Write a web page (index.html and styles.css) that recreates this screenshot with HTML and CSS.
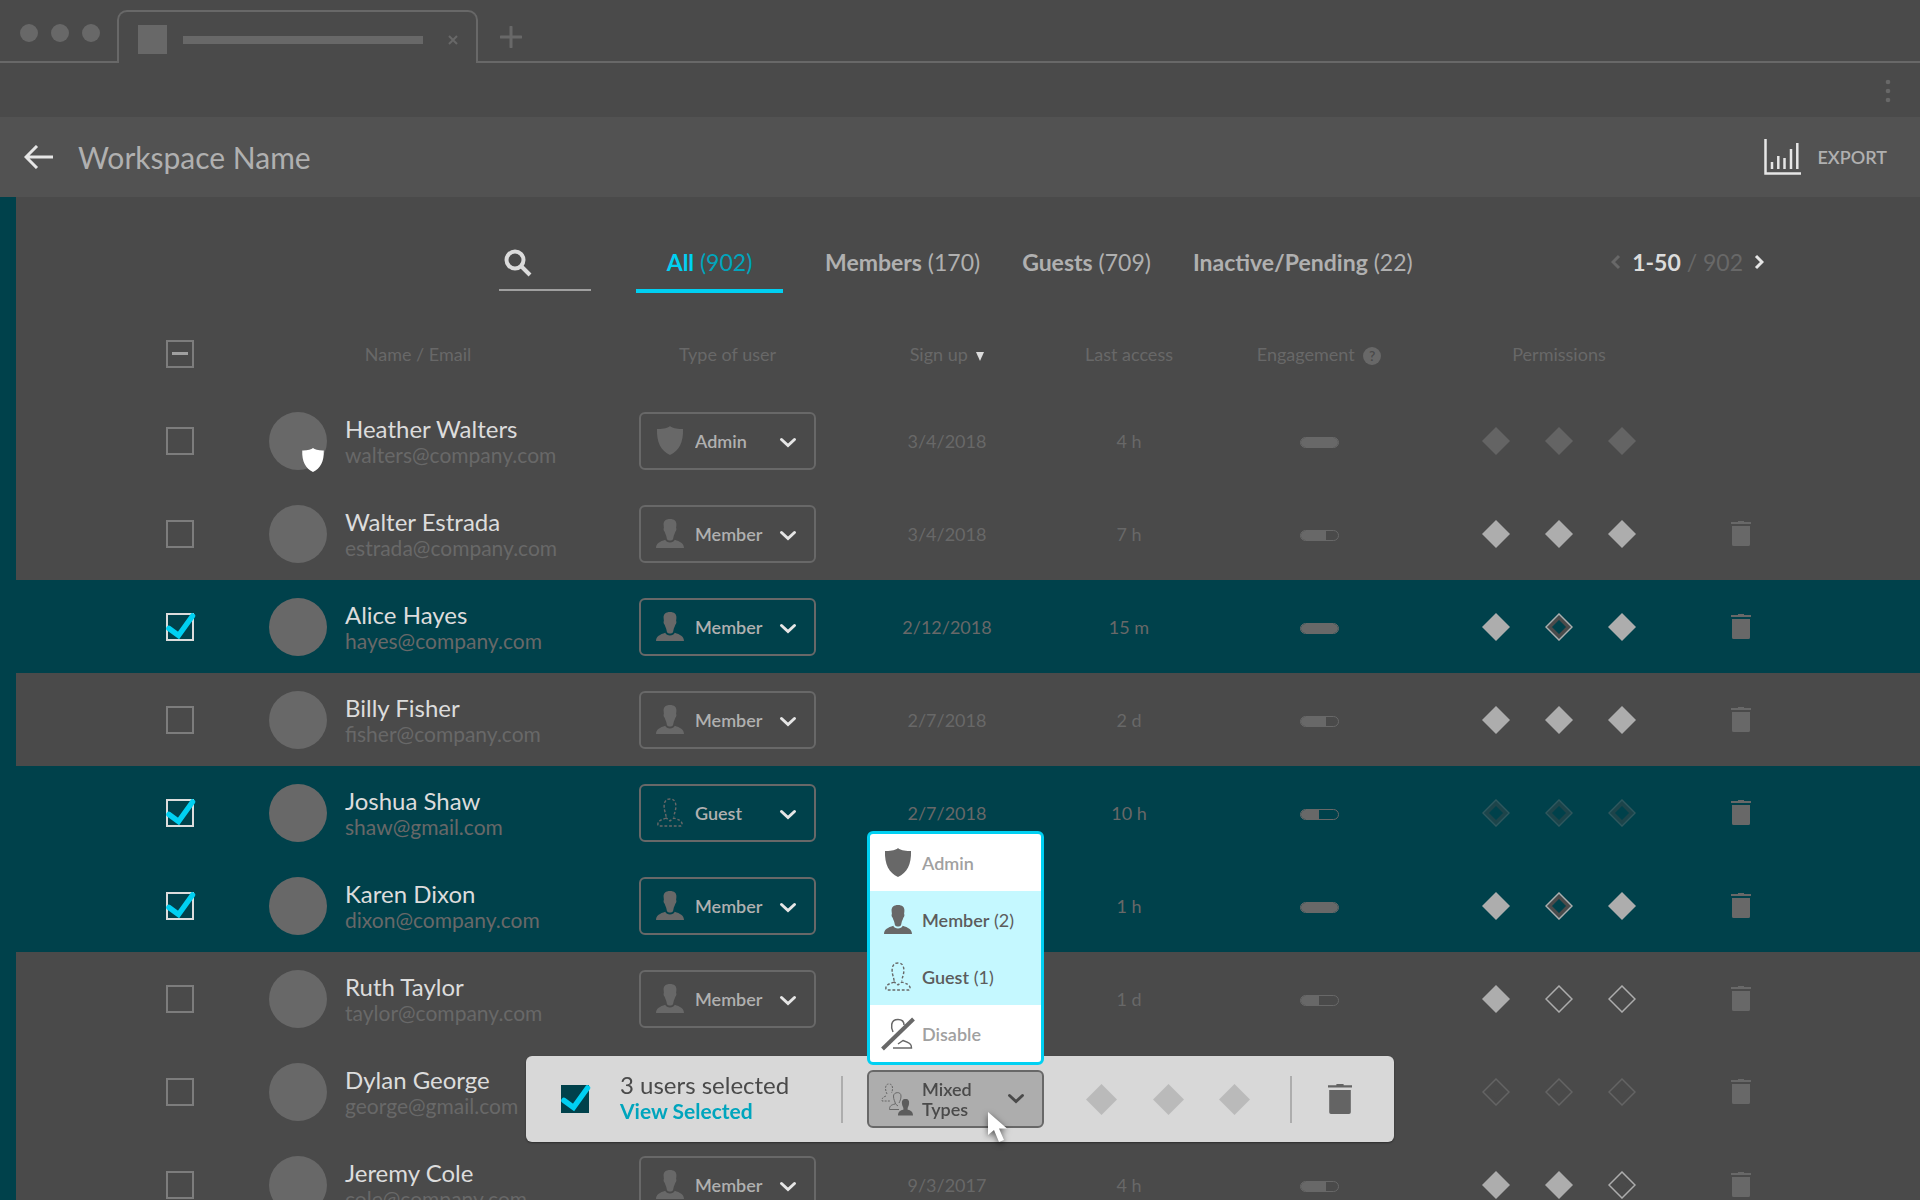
FILE: index.html
```html
<!DOCTYPE html>
<html lang="en">
<head>
    <meta charset="UTF-8">
    <meta name="viewport" content="width=device-width, initial-scale=1.0">
    <title>Workspace Name</title>
    <link rel="stylesheet" href="styles.css">
</head>
<body>
    <!-- shared icons -->
    <svg class="sprite" aria-hidden="true">
        <symbol id="shield" viewBox="0 0 26 29">
            <path d="M13 0C15 1.900 20 3.200 26 3C26.500 16 22 25 13 29C4 25 -.5 16 0 3C6 3.200 11 1.900 13 0Z" fill="currentColor"/>
        </symbol>
        <symbol id="member" viewBox="0 0 28 29">
            <path d="M14 0C9.800 0 7.300 2 7.600 6L7.900 9C7.200 9.500 7.600 12 8.700 12.800C9.200 15 10.300 16.500 10.500 18L10.800 19.500C11.200 22.200 16.800 22.200 17.200 19.500L17.500 18C17.700 16.500 18.800 15 19.300 12.800C20.400 12 20.800 9.500 20.100 9L20.400 6C20.700 2 18.200 0 14 0Z" fill="currentColor"/>
            <path d="M0 29C0 24.500 4 22.500 9.300 20.800C10.500 24.500 17.500 24.500 18.700 20.800C24 22.500 28 24.500 28 29Z" fill="currentColor"/>
        </symbol>
        <symbol id="guest" viewBox="0 0 28 31">
            <g fill="none" stroke="currentColor" stroke-width="1.500" stroke-dasharray="3 2">
                <path d="M9.800 20C9.500 16.500 8.500 15 8 12C7.400 9 7 1 14 1C21 1 20.600 9 20 12C19.500 15 18.500 16.500 18.200 20"/>
                <path d="M10 21.500C5 23 1 24.500 1 28C1 29.500 2 30 3 30H25C26 30 27 29.500 27 28C27 24.500 23 23 18 21.500L14 24.500Z"/>
            </g>
        </symbol>
        <symbol id="disable" viewBox="0 0 34 34">
            <g fill="none" stroke="currentColor" stroke-width="1.500">
                <path d="M12 15C10 11 9 2.500 17 2.500C21 2.500 23 4.500 23 8"/>
                <path d="M12 31H30.500C31 27 28 25.500 22 23.500L17 27"/>
                <path d="M1.500 32L32.500 2" stroke-width="4"/>
            </g>
        </symbol>
        <symbol id="mixed" viewBox="0 0 32 33">
            <g fill="none" stroke="#686868">
                <path d="M6 11C4 7 3.500 1 8 1C12.500 1 12 7 10.500 10M5 13C2 14 1 15 1 18H9" stroke-dasharray="2 1.200"/>
                <path d="M14.500 21C14 18 12.500 17 12.500 13C12.500 9 20 8 20 13C20 16 19 18 18 20M14 21C10 22 8.500 23 8.500 26.500H18M14.500 21L17 23"/>
            </g>
            <path d="M24.500 16C21.500 16 20.500 18 21 21C21 23 22.500 24 22.500 26.500C19 27.500 17 29 17 32.500H32C32 29 30 27.500 26.500 26.500C26.500 24 28 23 28 21C28.500 18 27.500 16 24.500 16Z" fill="#5c5c5c"/>
        </symbol>
        <symbol id="chevron" viewBox="0 0 18 12">
            <path d="M2.500 2.500L9 8.500L15.500 2.500" fill="none" stroke="currentColor" stroke-width="3" stroke-linecap="round"/>
        </symbol>
        <symbol id="check" viewBox="0 0 31 27">
            <path d="M3 15.500L12.500 22.500L26.500 3" fill="none" stroke="#00d0f2" stroke-width="5.500" stroke-linecap="round"/>
        </symbol>
        <symbol id="trash" viewBox="0 0 20 25">
            <path d="M7 1V0H13V1H20V3H0V1ZM1 5H19V23.500Q19 25 17.500 25H2.500Q1 25 1 23.500Z" fill="currentColor"/>
        </symbol>
        <symbol id="full" viewBox="0 0 28 28">
            <path d="M14 0L28 14L14 28L0 14Z" fill="currentColor"/>
        </symbol>
        <symbol id="empty" viewBox="0 0 28 28">
            <path class="inner" d="M14 4.500L23.500 14L14 23.500L4.500 14Z" fill="none" stroke-width="3.500"/>
            <path d="M14 1L27 14L14 27L1 14Z" fill="none" stroke="currentColor" stroke-width="1.500"/>
        </symbol>
    </svg>

    <div class="browser">
        <div class="strip">
            <div class="dots"><i></i><i></i><i></i></div>
            <div class="browser-tab">
                <span class="favicon"></span>
                <span class="tab-title"></span>
                <svg class="close" viewBox="0 0 10 10"><path d="M1 1L9 9M9 1L1 9"/></svg>
            </div>
            <div class="strip-rest">
                <svg class="plus" viewBox="0 0 22 22"><path d="M11 1V21M1 11H21"/></svg>
            </div>
        </div>
        <div class="address">
            <svg class="more" viewBox="0 0 6 24"><circle cx="3" cy="3" r="2.300"/><circle cx="3" cy="12" r="2.300"/><circle cx="3" cy="21" r="2.300"/></svg>
        </div>
    </div>

    <header class="header">
        <button class="back" aria-label="Back">
            <svg viewBox="0 0 29 24"><path d="M13 1L2 12L13 23M2 12H29"/></svg>
        </button>
        <h1>Workspace Name</h1>
        <button class="export">
            <svg viewBox="0 0 37 36"><path d="M1.500 0V34.500H37" stroke-width="2.500"/><path d="M8 23V30M14.300 17V30M20.500 19V30M27 10V30M33.300 4V30" stroke-width="2.500"/></svg>
            EXPORT
        </button>
    </header>

    <main class="content">
        <div class="toolbar">
            <label class="search">
                <svg viewBox="0 0 28 28"><circle cx="11" cy="11" r="8.500"/><path d="M17 17L26 26"/></svg>
                <input type="text" aria-label="Search">
            </label>
            <nav class="tabs">
                <a href="#" class="active"><b>All</b> (902)</a>
                <a href="#"><b>Members</b> (170)</a>
                <a href="#"><b>Guests</b> (709)</a>
                <a href="#"><b>Inactive/Pending</b> (22)</a>
            </nav>
            <div class="pager">
                <button class="prev" aria-label="Previous"><svg viewBox="0 0 10 16"><path d="M8 2L2 8L8 14"/></svg></button>
                <span><b>1-50</b> / 902</span>
                <button aria-label="Next"><svg viewBox="0 0 10 16"><path d="M2 2L8 8L2 14"/></svg></button>
            </div>
        </div>

        <table class="users">
            <colgroup>
                <col class="c-check"><col class="c-name"><col class="c-type"><col class="c-date"><col class="c-access"><col class="c-bar"><col class="c-perm"><col>
            </colgroup>
            <thead>
                <tr>
                    <th class="check"><label class="box some"><input type="checkbox" aria-label="Select all"></label></th>
                    <th>Name / Email</th>
                    <th>Type of user</th>
                    <th>Sign up <span class="sort"></span></th>
                    <th>Last access</th>
                    <th>Engagement <span class="help">?</span></th>
                    <th>Permissions</th>
                    <th></th>
                </tr>
            </thead>
            <tbody>
                <tr>
                    <td class="check"><label class="box"><input type="checkbox" aria-label="Heather Walters"></label></td>
                    <td><div class="user"><span class="avatar"><svg class="badge"><use href="#shield"/></svg></span><div><p class="name">Heather Walters</p><p class="email">walters@company.com</p></div></div></td>
                    <td><div class="type"><svg class="icon"><use href="#shield"/></svg><select aria-label="Type of user"><option>Admin</option></select><svg class="arrow"><use href="#chevron"/></svg></div></td>
                    <td>3/4/2018</td>
                    <td>4 h</td>
                    <td><div class="bar"><i style="width: 100%"></i></div></td>
                    <td><div class="perms off"><svg><use href="#full"/></svg><svg><use href="#full"/></svg><svg><use href="#full"/></svg></div></td>
                    <td></td>
                </tr>
                <tr>
                    <td class="check"><label class="box"><input type="checkbox" aria-label="Walter Estrada"></label></td>
                    <td><div class="user"><span class="avatar"></span><div><p class="name">Walter Estrada</p><p class="email">estrada@company.com</p></div></div></td>
                    <td><div class="type"><svg class="icon"><use href="#member"/></svg><select aria-label="Type of user"><option>Member</option></select><svg class="arrow"><use href="#chevron"/></svg></div></td>
                    <td>3/4/2018</td>
                    <td>7 h</td>
                    <td><div class="bar"><i style="width: 70%"></i></div></td>
                    <td><div class="perms"><svg><use href="#full"/></svg><svg><use href="#full"/></svg><svg><use href="#full"/></svg></div></td>
                    <td class="last"><button class="trash" aria-label="Delete"><svg><use href="#trash"/></svg></button></td>
                </tr>
                <tr class="selected">
                    <td class="check"><label class="box"><input type="checkbox" aria-label="Alice Hayes" checked><svg><use href="#check"/></svg></label></td>
                    <td><div class="user"><span class="avatar"></span><div><p class="name">Alice Hayes</p><p class="email">hayes@company.com</p></div></div></td>
                    <td><div class="type"><svg class="icon"><use href="#member"/></svg><select aria-label="Type of user"><option>Member</option></select><svg class="arrow"><use href="#chevron"/></svg></div></td>
                    <td>2/12/2018</td>
                    <td>15 m</td>
                    <td><div class="bar"><i style="width: 100%"></i></div></td>
                    <td><div class="perms"><svg><use href="#full"/></svg><svg><use href="#empty"/></svg><svg><use href="#full"/></svg></div></td>
                    <td class="last"><button class="trash" aria-label="Delete"><svg><use href="#trash"/></svg></button></td>
                </tr>
                <tr>
                    <td class="check"><label class="box"><input type="checkbox" aria-label="Billy Fisher"></label></td>
                    <td><div class="user"><span class="avatar"></span><div><p class="name">Billy Fisher</p><p class="email">fisher@company.com</p></div></div></td>
                    <td><div class="type"><svg class="icon"><use href="#member"/></svg><select aria-label="Type of user"><option>Member</option></select><svg class="arrow"><use href="#chevron"/></svg></div></td>
                    <td>2/7/2018</td>
                    <td>2 d</td>
                    <td><div class="bar"><i style="width: 70%"></i></div></td>
                    <td><div class="perms"><svg><use href="#full"/></svg><svg><use href="#full"/></svg><svg><use href="#full"/></svg></div></td>
                    <td class="last"><button class="trash" aria-label="Delete"><svg><use href="#trash"/></svg></button></td>
                </tr>
                <tr class="selected">
                    <td class="check"><label class="box"><input type="checkbox" aria-label="Joshua Shaw" checked><svg><use href="#check"/></svg></label></td>
                    <td><div class="user"><span class="avatar"></span><div><p class="name">Joshua Shaw</p><p class="email">shaw@gmail.com</p></div></div></td>
                    <td><div class="type"><svg class="icon"><use href="#guest"/></svg><select aria-label="Type of user"><option>Guest</option></select><svg class="arrow"><use href="#chevron"/></svg></div></td>
                    <td>2/7/2018</td>
                    <td>10 h</td>
                    <td><div class="bar"><i style="width: 50%"></i></div></td>
                    <td><div class="perms off"><svg><use href="#empty"/></svg><svg><use href="#empty"/></svg><svg><use href="#empty"/></svg></div></td>
                    <td class="last"><button class="trash" aria-label="Delete"><svg><use href="#trash"/></svg></button></td>
                </tr>
                <tr class="selected">
                    <td class="check"><label class="box"><input type="checkbox" aria-label="Karen Dixon" checked><svg><use href="#check"/></svg></label></td>
                    <td><div class="user"><span class="avatar"></span><div><p class="name">Karen Dixon</p><p class="email">dixon@company.com</p></div></div></td>
                    <td><div class="type"><svg class="icon"><use href="#member"/></svg><select aria-label="Type of user"><option>Member</option></select><svg class="arrow"><use href="#chevron"/></svg></div></td>
                    <td></td>
                    <td>1 h</td>
                    <td><div class="bar"><i style="width: 100%"></i></div></td>
                    <td><div class="perms"><svg><use href="#full"/></svg><svg><use href="#empty"/></svg><svg><use href="#full"/></svg></div></td>
                    <td class="last"><button class="trash" aria-label="Delete"><svg><use href="#trash"/></svg></button></td>
                </tr>
                <tr>
                    <td class="check"><label class="box"><input type="checkbox" aria-label="Ruth Taylor"></label></td>
                    <td><div class="user"><span class="avatar"></span><div><p class="name">Ruth Taylor</p><p class="email">taylor@company.com</p></div></div></td>
                    <td><div class="type"><svg class="icon"><use href="#member"/></svg><select aria-label="Type of user"><option>Member</option></select><svg class="arrow"><use href="#chevron"/></svg></div></td>
                    <td></td>
                    <td>1 d</td>
                    <td><div class="bar"><i style="width: 50%"></i></div></td>
                    <td><div class="perms"><svg><use href="#full"/></svg><svg><use href="#empty"/></svg><svg><use href="#empty"/></svg></div></td>
                    <td class="last"><button class="trash" aria-label="Delete"><svg><use href="#trash"/></svg></button></td>
                </tr>
                <tr>
                    <td class="check"><label class="box"><input type="checkbox" aria-label="Dylan George"></label></td>
                    <td><div class="user"><span class="avatar"></span><div><p class="name">Dylan George</p><p class="email">george@gmail.com</p></div></div></td>
                    <td></td>
                    <td></td>
                    <td></td>
                    <td></td>
                    <td><div class="perms off"><svg><use href="#empty"/></svg><svg><use href="#empty"/></svg><svg><use href="#empty"/></svg></div></td>
                    <td class="last"><button class="trash" aria-label="Delete"><svg><use href="#trash"/></svg></button></td>
                </tr>
                <tr>
                    <td class="check"><label class="box"><input type="checkbox" aria-label="Jeremy Cole"></label></td>
                    <td><div class="user"><span class="avatar"></span><div><p class="name">Jeremy Cole</p><p class="email">cole@company.com</p></div></div></td>
                    <td><div class="type"><svg class="icon"><use href="#member"/></svg><select aria-label="Type of user"><option>Member</option></select><svg class="arrow"><use href="#chevron"/></svg></div></td>
                    <td>9/3/2017</td>
                    <td>4 h</td>
                    <td><div class="bar"><i style="width: 70%"></i></div></td>
                    <td><div class="perms"><svg><use href="#full"/></svg><svg><use href="#full"/></svg><svg><use href="#empty"/></svg></div></td>
                    <td class="last"><button class="trash" aria-label="Delete"><svg><use href="#trash"/></svg></button></td>
                </tr>
            </tbody>
        </table>
    </main>

    <!-- bulk actions for the selected users -->
    <div class="bulk">
        <label class="box filled"><input type="checkbox" aria-label="Selected users" checked><svg><use href="#check"/></svg></label>
        <div class="summary">
            <p>3 users selected</p>
            <a href="#">View Selected</a>
        </div>
        <div class="mixed">
            <div class="menu">
                <button><svg><use href="#shield"/></svg><b>Admin</b></button>
                <button class="on"><svg><use href="#member"/></svg><b>Member</b> (2)</button>
                <button class="on"><svg><use href="#guest"/></svg><b>Guest</b> (1)</button>
                <button><svg class="wide"><use href="#disable"/></svg><b>Disable</b></button>
            </div>
            <button class="mixed-button">
                <svg class="group"><use href="#mixed"/></svg>
                <span>Mixed<br>Types</span>
                <svg class="arrow"><use href="#chevron"/></svg>
            </button>
            <svg class="cursor" viewBox="0 0 20 32"><path d="M1 1V24L7 19L12 31L17 29L12 17.500H20Z"/></svg>
        </div>
        <div class="bulk-perms"><svg><use href="#full"/></svg><svg><use href="#full"/></svg><svg><use href="#full"/></svg></div>
        <button class="trash big" aria-label="Delete selected"><svg><use href="#trash"/></svg></button>
    </div>
</body>
</html>
```

FILE: styles.css
```css
* {
    box-sizing: border-box;
}
body {
    margin: 0;
    height: 100vh;
    overflow: hidden;
    background: #4a4a4a;
    color: #686868;
    font-family: Lato, "Open Sans", sans-serif;
    font-size: 18px;
}
p, h1 {
    margin: 0;
    font-weight: 400;
}
b {
    font-weight: 600;
}
a {
    color: inherit;
    text-decoration: none;
}
button {
    display: flex;
    align-items: center;
    padding: 0;
    border: 0;
    background: none;
    color: inherit;
    font: inherit;
    cursor: pointer;
}
svg {
    display: block;
    flex: none;
}
.sprite {
    position: absolute;
    width: 0;
    height: 0;
}

/* browser window */
.strip {
    display: flex;
    height: 63px;
}
.dots {
    display: flex;
    gap: 13px;
    width: 117px;
    padding: 24px 0 0 20px;
    border-bottom: 2px solid #686868;
}
.dots i {
    width: 18px;
    height: 18px;
    border-radius: 50%;
    background: #686868;
}
.browser-tab {
    display: flex;
    align-items: center;
    width: 361px;
    margin-top: 10px;
    padding: 4px 18px 0 19px;
    border: 2px solid #686868;
    border-bottom: 0;
    border-radius: 10px 10px 0 0;
}
.favicon {
    width: 29px;
    height: 29px;
    margin-right: 16px;
    background: #686868;
}
.tab-title {
    width: 240px;
    height: 8px;
    background: #686868;
}
.close {
    width: 10px;
    height: 10px;
    margin-left: auto;
}
.close path, .plus path {
    stroke: #686868;
    stroke-width: 2;
}
.plus path {
    stroke-width: 3;
    stroke-linecap: round;
}
.strip-rest {
    flex: 1;
    padding: 26px 0 0 22px;
    border-bottom: 2px solid #686868;
}
.plus {
    width: 22px;
    height: 22px;
}
.address {
    display: flex;
    justify-content: flex-end;
    height: 54px;
    padding: 16px 29px;
}
.more {
    width: 6px;
    height: 24px;
    fill: #686868;
}

.header {
    display: flex;
    align-items: center;
    height: 80px;
    padding: 0 33px 0 24px;
    background: #525252;
    color: #b0b0b0;
}
.header h1 {
    margin-left: 25px;
    font-size: 30px;
}
.back svg {
    width: 29px;
    height: 24px;
}
.header svg {
    fill: none;
    stroke: #e6e6e6;
    stroke-width: 3;
}
.export {
    gap: 17px;
    margin-left: auto;
    font-weight: 600;
}
.export svg {
    width: 37px;
    height: 36px;
}

.content {
    border-left: 16px solid #00414b;
}
.toolbar {
    display: flex;
    height: 96px;
    padding: 0 156px 0 483px;
    font-size: 23px;
}
.search {
    position: relative;
    width: 92px;
    margin-right: 45px;
}
.search svg {
    position: absolute;
    left: 5px;
    top: 52px;
    width: 28px;
    height: 28px;
    fill: none;
    stroke: #dcdcdc;
    stroke-width: 4;
}
.search input {
    width: 100%;
    height: 94px;
    padding: 45px 0 0 36px;
    border: 0;
    border-bottom: 2px solid #a0a0a0;
    background: none;
    color: #dcdcdc;
    font: inherit;
    outline: 0;
}
.tabs {
    display: flex;
    gap: 42px;
    color: #b0b0b0;
}
.tabs a {
    padding-top: 51px;
    line-height: 28px;
}
.tabs b, .pager b {
    font-weight: 700;
}
.tabs .active {
    width: 147px;
    border-bottom: 4px solid #00d0f2;
    color: #00a5bd;
    text-align: center;
}
.tabs .active b {
    color: #00d0f2;
}
.pager {
    display: flex;
    align-items: center;
    gap: 11px;
    margin-left: auto;
    padding: 51px 0 17px;
}
.pager b {
    color: #dcdcdc;
}
.pager svg {
    width: 10px;
    height: 16px;
    fill: none;
    stroke: #e6e6e6;
    stroke-width: 3;
}
.pager .prev svg {
    stroke: #686868;
}

/* users table */
.users {
    width: 100%;
    margin-top: 21px;
    border-collapse: collapse;
    table-layout: fixed;
    text-align: center;
}
.c-check { width: 252px; }
.c-name { width: 300px; }
.c-type { width: 319px; }
.c-date { width: 120px; }
.c-access { width: 244px; }
.c-bar { width: 136px; }
.c-perm { width: 344px; }
th {
    height: 80px;
    padding: 0;
    font-weight: 400;
    white-space: nowrap;
}
td {
    height: 93px;
    padding: 0;
}
.selected {
    background: #00414b;
}
.check {
    padding-left: 150px;
}
.box {
    position: relative;
    display: block;
    width: 28px;
    height: 28px;
}
.box input {
    appearance: none;
    display: block;
    width: 28px;
    height: 28px;
    margin: 0;
    border: 2px solid #7d7d7d;
}
.box input:checked {
    border-color: #dcdcdc;
}
.box svg {
    position: absolute;
    left: 0;
    top: 0;
    width: 31px;
    height: 27px;
}
.some::after {
    content: "";
    position: absolute;
    left: 6px;
    top: 12px;
    width: 16px;
    height: 3px;
    background: #a0a0a0;
}
.filled input:checked {
    border: 0;
    background: #00414b;
}
.sort {
    display: inline-block;
    margin-left: 4px;
    border: 4px solid transparent;
    border-top: 9px solid #dcdcdc;
    border-bottom: 0;
}
.help {
    display: inline-block;
    width: 18px;
    height: 18px;
    margin-left: 4px;
    border-radius: 50%;
    background: #686868;
    color: #4a4a4a;
    font-size: 14px;
    font-weight: 600;
    line-height: 18px;
}
.user {
    display: flex;
    align-items: center;
    gap: 18px;
    padding-left: 1px;
    text-align: left;
}
.avatar {
    position: relative;
    flex: none;
    width: 58px;
    height: 58px;
    border-radius: 50%;
    background: #686868;
}
.badge {
    position: absolute;
    right: 2px;
    bottom: -2px;
    width: 24px;
    height: 24px;
    color: #fff;
}
.name {
    color: #dcdcdc;
    font-size: 24px;
    line-height: 28px;
}
.email {
    font-size: 21px;
    line-height: 24px;
}
.type {
    position: relative;
    width: 177px;
    height: 58px;
    margin: 0 auto;
}
.type select {
    appearance: none;
    width: 100%;
    height: 100%;
    padding: 0 40px 0 54px;
    border: 2px solid #686868;
    border-radius: 6px;
    background: none;
    color: #b0b0b0;
    font: inherit;
    font-weight: 600;
}
.type .icon {
    position: absolute;
    left: 17px;
    top: 14px;
    width: 28px;
    height: 29px;
}
.arrow {
    width: 18px;
    height: 12px;
}
.type .arrow {
    position: absolute;
    right: 19px;
    top: 25px;
    color: #e6e6e6;
}
.bar {
    width: 39px;
    height: 11px;
    margin: 3px auto 0;
    border: 1px solid #686868;
    border-radius: 6px;
    overflow: hidden;
}
.bar i {
    display: block;
    height: 100%;
    background: #686868;
}
.perms {
    display: flex;
    justify-content: center;
    gap: 35px;
    color: #adadad;
}
.perms svg {
    width: 28px;
    height: 28px;
}
.perms.off {
    color: #646464;
}
.inner {
    stroke: #4a4a4a;
}
.selected .perms.off {
    opacity: 0.4;
    color: #787878;
}
.trash svg {
    width: 20px;
    height: 25px;
}

/* floating bar */
.bulk {
    position: fixed;
    left: 50%;
    bottom: 58px;
    transform: translateX(-50%);
    display: flex;
    align-items: center;
    width: 868px;
    height: 86px;
    padding: 0 42px 0 35px;
    border-radius: 6px;
    background: #d8d8d8;
    box-shadow: 0 1px 2px rgba(0, 0, 0, 0.4);
    color: #4a4a4a;
}
.summary {
    display: flex;
    flex-direction: column;
    justify-content: center;
    width: 223px;
    height: 47px;
    margin: 0 24px 0 31px;
    border-right: 2px solid #adadad;
    font-size: 24px;
    line-height: 24px;
}
.summary a {
    color: #00a5bd;
    font-size: 21px;
    font-weight: 700;
    line-height: 28px;
}
.mixed {
    position: relative;
}
.mixed-button {
    width: 177px;
    height: 58px;
    padding: 0 17px 0 12px;
    border: 2px solid #686868;
    border-radius: 6px;
    background: #adadad;
    font-weight: 600;
    line-height: 20px;
    text-align: left;
}
.group {
    width: 32px;
    height: 33px;
    margin-right: 9px;
}
.mixed-button .arrow {
    margin-left: auto;
}
.menu {
    position: absolute;
    left: 0;
    bottom: 63px;
    width: 177px;
    border: 3px solid #00d0f2;
    border-radius: 6px;
    background: #fff;
    overflow: hidden;
}
.menu button {
    width: 100%;
    height: 57px;
    padding-left: 14px;
    color: #a0a0a0;
    white-space: pre;
}
.menu .on {
    background: #c5f8ff;
    color: #5c5c5c;
}
.menu svg {
    width: 28px;
    height: 29px;
    margin-right: 10px;
    color: #686868;
}
.menu .wide {
    width: 34px;
    height: 34px;
    margin: 0 7px 0 -3px;
}
.cursor {
    position: absolute;
    left: 120px;
    top: 41px;
    width: 20px;
    height: 32px;
    fill: #fff;
    filter: drop-shadow(0 2px 3px rgba(0, 0, 0, 0.6));
}
.bulk-perms {
    display: flex;
    align-items: center;
    justify-content: space-between;
    width: 248px;
    height: 47px;
    padding: 0 40px 0 42px;
    border-right: 2px solid #adadad;
    color: #bababa;
}
.bulk-perms svg {
    width: 31px;
    height: 31px;
}
.big {
    margin-left: auto;
    color: #646464;
}
.big svg {
    width: 24px;
    height: 30px;
}
```
